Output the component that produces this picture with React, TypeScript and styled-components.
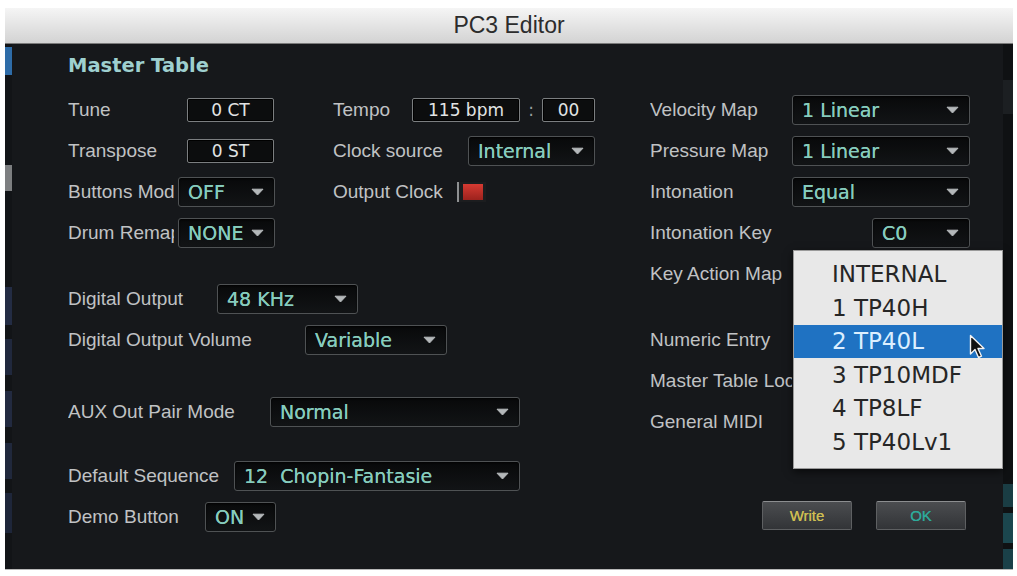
import styled, { createGlobalStyle } from "styled-components";

const GlobalStyle = createGlobalStyle`
  html, body {
    margin: 0;
    padding: 0;
    background: #ffffff;
  }
  body {
    font-family: "Liberation Sans", Arial, sans-serif;
  }
`;

const Page = styled.div`
  width: 1017px;
  height: 576px;
  box-sizing: border-box;
  padding: 8px 4px 6px 5px;
  background: #ffffff;
  overflow: hidden;
`;

const Window = styled.div`
  display: flex;
  flex-direction: column;
  height: 100%;
`;

const TitleBar = styled.div`
  height: 35px;
  flex: none;
  display: flex;
  align-items: center;
  justify-content: center;
  background: linear-gradient(#f5f5f5, #d3d3d3);
  border-bottom: 1px solid #7a7a7a;
  font-family: "Liberation Sans", Arial, sans-serif;
  font-size: 23px;
  color: #2c2c2c;
`;

const Body = styled.div`
  flex: 1;
  display: flex;
  background: #16181b;
  border-bottom: 1px solid #b8b8b8;
  overflow: hidden;
`;

const Strip = styled.div<{ $w: number; $bg: string }>`
  width: ${(p) => p.$w}px;
  flex: none;
  display: flex;
  flex-direction: column;
  background: ${(p) => p.$bg};
`;

const StripBlock = styled.div<{ $h: number; $c: string; $mt: number }>`
  height: ${(p) => p.$h}px;
  margin-top: ${(p) => p.$mt}px;
  background: ${(p) => p.$c};
`;

const Content = styled.div`
  flex: 1;
  display: flex;
  padding: 10px 0 0 56px;
`;

const LeftArea = styled.div`
  width: 582px;
  flex: none;
  display: flex;
  flex-direction: column;
`;

const Heading = styled.h1`
  margin: 0 0 11px;
  height: 24px;
  line-height: 24px;
  font-family: "DejaVu Sans", Verdana, sans-serif;
  font-weight: bold;
  font-size: 19.5px;
  color: #9ed0cf;
`;

const TopGrid = styled.div`
  display: flex;
  margin-top: 0.5px;
`;

const Column = styled.div<{ $w?: number }>`
  display: flex;
  flex-direction: column;
  width: ${(p) => (p.$w ? `${p.$w}px` : "auto")};
  flex: none;
`;

const Row = styled.div<{ $mt?: number }>`
  position: relative;
  height: 41px;
  flex: none;
  display: flex;
  align-items: center;
  margin-top: ${(p) => p.$mt ?? 0}px;
`;

const Label = styled.span<{ $w: number; $mr?: number }>`
  width: ${(p) => p.$w}px;
  margin-right: ${(p) => p.$mr ?? 0}px;
  flex: none;
  overflow: hidden;
  white-space: nowrap;
  font-family: "Liberation Sans", Arial, sans-serif;
  font-size: 19px;
  color: #c0c2c4;
`;

const Dropdown = styled.div<{ $w: number }>`
  width: ${(p) => p.$w}px;
  height: 30px;
  box-sizing: border-box;
  flex: none;
  display: flex;
  align-items: center;
  justify-content: space-between;
  padding: 0 10px 0 9px;
  border: 1.5px solid #4f5254;
  border-radius: 3px;
  background: linear-gradient(#08090a, #121416);
  box-shadow: inset 0 1px 2px rgba(0, 0, 0, 0.8);
`;

const DropValue = styled.span`
  font-family: "DejaVu Sans", Verdana, sans-serif;
  font-size: 19px;
  color: #86ccbd;
  text-shadow: 0 0 0.6px #86ccbd;
  white-space: pre;
`;

const ValueBox = styled.div<{ $w: number }>`
  width: ${(p) => p.$w}px;
  height: 24px;
  box-sizing: border-box;
  flex: none;
  display: flex;
  align-items: center;
  justify-content: center;
  border: 1px solid #7b7e80;
  border-radius: 2px;
  background: #0c0d0e;
  box-shadow: inset 0 0 0 1px #000;
  font-family: "DejaVu Sans", Verdana, sans-serif;
  font-size: 17px;
  color: #e2e4e4;
`;

const Colon = styled.span`
  width: 22px;
  text-align: center;
  font-family: "DejaVu Sans", Verdana, sans-serif;
  font-size: 17px;
  color: #9a9c9e;
`;

const Led = styled.span`
  width: 29px;
  height: 20px;
  box-sizing: border-box;
  flex: none;
  padding: 2px 3px 2px 4px;
  border-left: 2px solid #8e9092;
  background: #1c1d1f;

  &::after {
    content: "";
    display: block;
    height: 100%;
    background: linear-gradient(#d63a32, #9c221d);
  }
`;

const LowerLeft = styled.div`
  display: flex;
  flex-direction: column;
  margin-top: 25px;
`;

const RightColumn = styled.div`
  width: 320px;
  flex: none;
  display: flex;
  flex-direction: column;
  margin-top: 35.5px;
`;

const SpacedRight = styled.div`
  display: flex;
  justify-content: flex-end;
  flex: 1;
`;

const Menu = styled.ul`
  position: absolute;
  top: -4px;
  left: 143px;
  width: 210px;
  box-sizing: border-box;
  margin: 0;
  padding: 7px 0 9px;
  list-style: none;
  background: #e8e8e8;
  border: 1px solid #9a9a9a;
  box-shadow: 0 3px 8px rgba(0, 0, 0, 0.6);
  z-index: 2;
`;

const MenuItem = styled.li<{ $active?: boolean }>`
  position: relative;
  height: 33.5px;
  display: flex;
  align-items: center;
  padding-left: 38px;
  font-family: "DejaVu Sans", Verdana, sans-serif;
  font-size: 23px;
  color: ${(p) => (p.$active ? "#dcefff" : "#262626")};
  background: ${(p) => (p.$active ? "#1f72c2" : "transparent")};
`;

const Cursor = styled.svg`
  position: absolute;
  right: 16px;
  top: 9px;
`;

const ButtonRow = styled.div`
  display: flex;
  justify-content: flex-end;
  gap: 24px;
  margin: 58px 4px 0 0;
`;

const PanelButton = styled.button<{ $color: string }>`
  width: 90px;
  height: 29px;
  padding: 0;
  border: 1px solid #5e6062;
  border-top-color: #8c8e90;
  border-radius: 2px;
  background: linear-gradient(#4b4d50, #323437);
  font-family: "Liberation Sans", Arial, sans-serif;
  font-size: 15px;
  color: ${(p) => p.$color};
  text-shadow: 0 0 0.6px ${(p) => p.$color};
`;

function Arrow() {
  return (
    <svg width="13" height="8" viewBox="0 0 13 8">
      <path d="M1 1.2 L12 1.2 L6.5 7 Z" fill="#b4b8ba" stroke="#b4b8ba" strokeLinejoin="round" />
    </svg>
  );
}

function Select({ w, value }: { w: number; value: string }) {
  return (
    <Dropdown $w={w}>
      <DropValue>{value}</DropValue>
      <Arrow />
    </Dropdown>
  );
}

const KEY_MAPS = ["INTERNAL", "1 TP40H", "2 TP40L", "3 TP10MDF", "4 TP8LF", "5 TP40Lv1"];

export default function App() {
  return (
    <>
      <GlobalStyle />
      <Page>
        <Window>
          <TitleBar>PC3 Editor</TitleBar>
          <Body>
            <Strip $w={7} $bg="#121417">
              <StripBlock $mt={3} $h={28} $c="#2e6ca8" />
              <StripBlock $mt={90} $h={26} $c="#7c7e80" />
              <StripBlock $mt={96} $h={38} $c="#232c44" />
              <StripBlock $mt={14} $h={36} $c="#20283d" />
              <StripBlock $mt={16} $h={36} $c="#222a40" />
              <StripBlock $mt={16} $h={36} $c="#20283c" />
              <StripBlock $mt={14} $h={40} $c="#1e263a" />
            </Strip>
            <Content>
              <LeftArea>
                <Heading>Master Table</Heading>
                <TopGrid>
                  <Column $w={265}>
                    <Row>
                      <Label $w={119}>Tune</Label>
                      <ValueBox $w={87}>0 CT</ValueBox>
                    </Row>
                    <Row>
                      <Label $w={119}>Transpose</Label>
                      <ValueBox $w={87}>0 ST</ValueBox>
                    </Row>
                    <Row>
                      <Label $w={107} $mr={3}>Buttons Mode</Label>
                      <Select w={97} value="OFF" />
                    </Row>
                    <Row>
                      <Label $w={106} $mr={4}>Drum Remap</Label>
                      <Select w={97} value="NONE" />
                    </Row>
                  </Column>
                  <Column>
                    <Row>
                      <Label $w={79}>Tempo</Label>
                      <ValueBox $w={108}>115 bpm</ValueBox>
                      <Colon>:</Colon>
                      <ValueBox $w={53}>00</ValueBox>
                    </Row>
                    <Row>
                      <Label $w={135}>Clock source</Label>
                      <Select w={127} value="Internal" />
                    </Row>
                    <Row>
                      <Label $w={124}>Output Clock</Label>
                      <Led />
                    </Row>
                  </Column>
                </TopGrid>
                <LowerLeft>
                  <Row>
                    <Label $w={149}>Digital Output</Label>
                    <Select w={141} value="48 KHz" />
                  </Row>
                  <Row>
                    <Label $w={237}>Digital Output Volume</Label>
                    <Select w={142} value="Variable" />
                  </Row>
                  <Row $mt={31}>
                    <Label $w={202}>AUX Out Pair Mode</Label>
                    <Select w={250} value="Normal" />
                  </Row>
                  <Row $mt={23}>
                    <Label $w={166}>Default Sequence</Label>
                    <Select w={286} value="12  Chopin-Fantasie" />
                  </Row>
                  <Row>
                    <Label $w={137}>Demo Button</Label>
                    <Select w={71} value="ON" />
                  </Row>
                </LowerLeft>
              </LeftArea>
              <RightColumn>
                <Row>
                  <Label $w={142}>Velocity Map</Label>
                  <Select w={178} value="1 Linear" />
                </Row>
                <Row>
                  <Label $w={142}>Pressure Map</Label>
                  <Select w={178} value="1 Linear" />
                </Row>
                <Row>
                  <Label $w={142}>Intonation</Label>
                  <Select w={178} value="Equal" />
                </Row>
                <Row>
                  <Label $w={142}>Intonation Key</Label>
                  <SpacedRight>
                    <Select w={98} value="C0" />
                  </SpacedRight>
                </Row>
                <Row>
                  <Label $w={142}>Key Action Map</Label>
                  <Menu>
                    {KEY_MAPS.map((m) => (
                      <MenuItem key={m} $active={m === "2 TP40L"}>
                        {m}
                        {m === "2 TP40L" && (
                          <Cursor width="17" height="26" viewBox="0 0 17 26">
                            <path
                              d="M1.5 1.5 L1.5 20 L6 15.5 L9.5 23.5 L12.5 22.2 L9 14.5 L15 14.5 Z"
                              fill="#111"
                              stroke="#f2f2f2"
                              strokeWidth="1.4"
                              strokeLinejoin="round"
                            />
                          </Cursor>
                        )}
                      </MenuItem>
                    ))}
                  </Menu>
                </Row>
                <Row $mt={25}>
                  <Label $w={142}>Numeric Entry</Label>
                </Row>
                <Row>
                  <Label $w={142}>Master Table Lock</Label>
                </Row>
                <Row>
                  <Label $w={142}>General MIDI</Label>
                </Row>
                <ButtonRow>
                  <PanelButton $color="#cdbd52">Write</PanelButton>
                  <PanelButton $color="#2ea99a">OK</PanelButton>
                </ButtonRow>
              </RightColumn>
            </Content>
            <Strip $w={10} $bg="#0f1113">
              <StripBlock $mt={36} $h={34} $c="#1c1f22" />
              <StripBlock $mt={370} $h={24} $c="#1a3d44" />
              <StripBlock $mt={6} $h={30} $c="#1b464e" />
              <StripBlock $mt={6} $h={20} $c="#1a4048" />
            </Strip>
          </Body>
        </Window>
      </Page>
    </>
  );
}
